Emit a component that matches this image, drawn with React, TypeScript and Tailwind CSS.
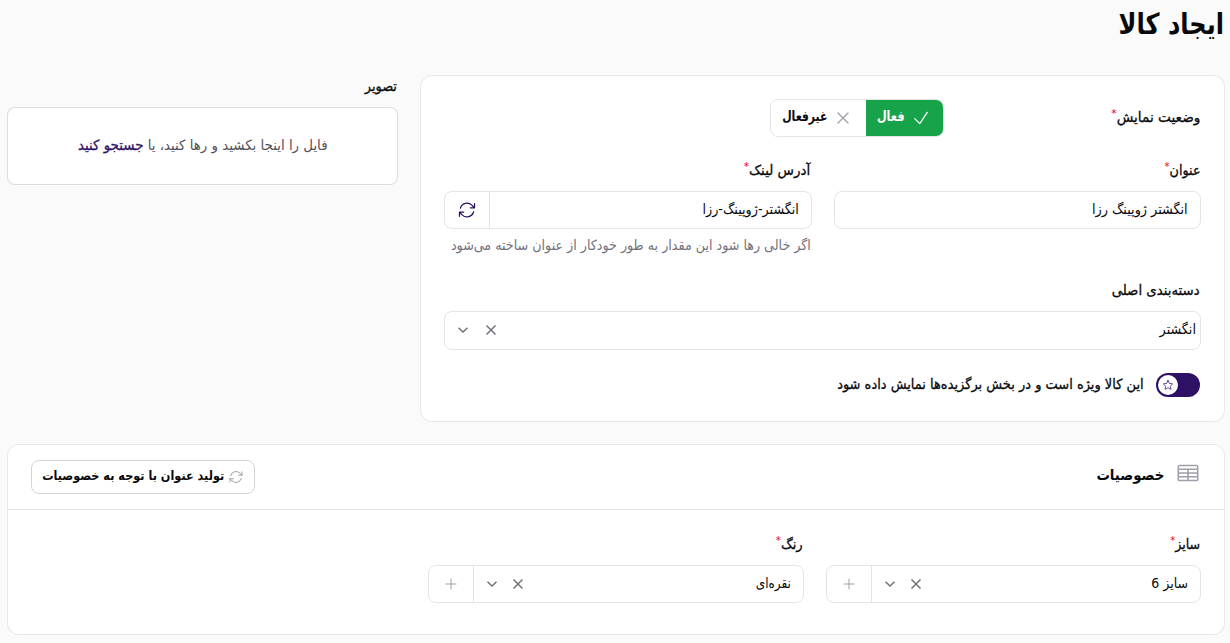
import type { ReactNode } from "react";
import {
  HiOutlineArrowPath,
  HiOutlineCheck,
  HiOutlinePlus,
  HiOutlineStar,
  HiOutlineTableCells,
  HiOutlineXMark,
} from "react-icons/hi2";

function Label({
  children,
  required,
  className = "scale-x-[0.95]",
}: {
  children: ReactNode;
  required?: boolean;
  className?: string;
}) {
  return (
    <div className="h-6 pr-px text-[14px] leading-[22px] whitespace-nowrap text-zinc-950">
      <span className={`inline-flex h-[22px] origin-right items-center ${className}`}>
        <span className="[-webkit-text-stroke:0.3px]">{children}</span>
        {required && <span className="-mt-2 text-[11px] leading-none text-red-600">*</span>}
      </span>
    </div>
  );
}

function Value({ children, className = "scale-x-[0.915]" }: { children: ReactNode; className?: string }) {
  return (
    <span className={`inline-block origin-right pb-[3px] text-[14px] leading-6 whitespace-nowrap ${className}`}>
      {children}
    </span>
  );
}

function Clear() {
  return (
    <svg viewBox="0 0 10 10" className="size-[10px] text-zinc-500" fill="none" stroke="currentColor" strokeWidth="1.5">
      <path d="M0.5 0.5 9.5 9.5M9.5 0.5 0.5 9.5" />
    </svg>
  );
}

function Chevron() {
  return (
    <svg viewBox="0 0 10 6" className="h-[6px] w-[10px] text-zinc-500" fill="none" stroke="currentColor" strokeWidth="1.5">
      <path d="M0.5 0.7 5 5 9.5 0.7" />
    </svg>
  );
}

function SelectWithAdd({ children }: { children: ReactNode }) {
  return (
    <div className="flex h-[38px] w-full overflow-hidden rounded-lg border border-zinc-200 bg-white">
      <div className="flex flex-1 items-center pr-3 pl-[13px]">
        {children}
        <span className="mr-auto flex items-center gap-4">
          <Clear />
          <Chevron />
        </span>
      </div>
      <div className="flex w-[45px] items-center justify-center border-r border-zinc-200 text-zinc-400">
        <HiOutlinePlus className="size-4" />
      </div>
    </div>
  );
}

export default function App() {
  return (
    <div
      dir="rtl"
      className="h-[643px] overflow-hidden bg-[#fafafa] pr-[5px] pl-[7px] font-['DejaVu_Sans',sans-serif] text-zinc-950"
    >
      <header className="flex h-[75px] items-start pr-px">
        <h1 className="origin-right scale-x-[0.83] text-[29px] leading-[48px] font-bold">ایجاد کالا</h1>
      </header>

      <div className="flex gap-[22px]">
        <section className="h-[347px] w-[805px] rounded-xl border border-zinc-200/80 bg-white px-[23px] pt-[23px]">
          <div className="flex h-[38px]">
            <div className="w-[257px] pt-[7px]">
              <Label required className="scale-x-[0.975]">
                وضعیت نمایش
              </Label>
            </div>
            <div className="flex h-[38px] overflow-hidden rounded-lg border border-zinc-200 text-[14px] font-bold">
              <div className="flex w-[77px] items-center gap-[7px] bg-[#16a34a] pr-3 text-white">
                <HiOutlineCheck className="size-5 shrink-0" />
                <span className="origin-right scale-x-[0.8] pb-[3px]">فعال</span>
              </div>
              <div className="flex w-[95px] items-center gap-[6px] bg-white pr-[13px]">
                <HiOutlineXMark className="size-5 shrink-0 text-zinc-400" />
                <span className="origin-right scale-x-[0.775] pb-[3px]">غیرفعال</span>
              </div>
            </div>
          </div>

          <div className="mt-[22px] grid grid-cols-2 gap-[22px]">
            <div>
              <Label required className="scale-x-[0.91]">
                عنوان
              </Label>
              <div className="mt-[8px] flex h-[38px] items-center rounded-lg border border-zinc-200 px-3">
                <Value>انگشتر ژوپینگ رزا</Value>
              </div>
            </div>
            <div>
              <Label required className="scale-x-[0.96]">
                آدرس لینک
              </Label>
              <div className="mt-[8px] flex h-[38px] rounded-lg border border-zinc-200">
                <div className="flex flex-1 items-center pr-3">
                  <Value className="scale-x-[0.91]">انگشتر-ژوپینگ-رزا</Value>
                </div>
                <div className="flex w-[45px] items-center justify-center border-r border-zinc-200 text-[#2e1065]">
                  <HiOutlineArrowPath className="size-5" />
                </div>
              </div>
              <p className="mt-1 h-6 w-[367px] pr-px text-[14px] leading-6 whitespace-nowrap text-zinc-500">
                <span className="inline-block origin-right scale-x-[0.907]">
                  اگر خالی رها شود این مقدار به طور خودکار از عنوان ساخته می‌شود
                </span>
              </p>
            </div>
          </div>

          <div className="mt-[22px]">
            <Label>دسته‌بندی اصلی</Label>
            <div className="mt-[8px] flex h-[39px] items-center rounded-lg border border-zinc-200 pr-1 pl-[13px]">
              <Value className="scale-x-[0.91]">انگشتر</Value>
              <span className="mr-auto flex items-center gap-[18px] pb-px">
                <Clear />
                <Chevron />
              </span>
            </div>
          </div>

          <div className="mt-[23px] flex h-6 items-center gap-[11px] pr-px">
            <div className="flex h-6 w-11 shrink-0 items-center justify-end rounded-full bg-[#2e1065] p-[2px]">
              <div className="flex size-5 items-center justify-center rounded-full bg-white text-[#2e1065]">
                <HiOutlineStar className="size-3" />
              </div>
            </div>
            <div className="w-[310px]">
              <Label className="scale-x-[0.927]">این کالا ویژه است و در بخش برگزیده‌ها نمایش داده شود</Label>
            </div>
          </div>
        </section>

        <aside className="w-[391px]">
          <Label className="scale-x-[0.92]">تصویر</Label>
          <div className="mt-[8px] flex h-[78px] items-center justify-center rounded-lg border border-zinc-300/80 bg-white pb-[2px] text-[14px] text-zinc-600">
            <p className="scale-x-[0.954] whitespace-nowrap">
              فایل را اینجا بکشید و رها کنید، یا{" "}
              <span className="text-[#2e1065] [-webkit-text-stroke:0.3px]">جستجو کنید</span>
            </p>
          </div>
        </aside>
      </div>

      <section className="mt-[22px] h-[191px] rounded-xl border border-zinc-200/80 bg-white">
        <div className="flex h-[65px] items-center border-b border-zinc-200 px-[23px]">
          <div className="flex items-center pr-px">
            <HiOutlineTableCells className="mb-2 size-6 text-zinc-400" />
            <h2 className="mr-3 mb-1 origin-right scale-x-[0.89] text-[15px] leading-6 font-bold">خصوصیات</h2>
          </div>
          <button className="mr-auto flex h-[34px] w-[224px] items-center gap-1 rounded-lg border border-zinc-300 px-[10px] text-[13px] font-bold whitespace-nowrap">
            <HiOutlineArrowPath className="size-4 shrink-0 text-zinc-400" />
            <span className="origin-right scale-x-[0.866] pb-[2px]">تولید عنوان با توجه به خصوصیات</span>
          </button>
        </div>
        <div className="flex gap-[22px] px-[23px] pt-[23px]">
          <div className="w-[375px]">
            <Label required className="scale-x-[0.9]">
              سایز
            </Label>
            <div className="mt-[8px]">
              <SelectWithAdd>
                <Value className="scale-x-[0.895]">سایز 6</Value>
              </SelectWithAdd>
            </div>
          </div>
          <div className="w-[376px]">
            <Label required className="scale-x-[0.94]">
              رنگ
            </Label>
            <div className="mt-[8px]">
              <SelectWithAdd>
                <Value className="scale-x-[0.86]">نقره‌ای</Value>
              </SelectWithAdd>
            </div>
          </div>
        </div>
      </section>
    </div>
  );
}
